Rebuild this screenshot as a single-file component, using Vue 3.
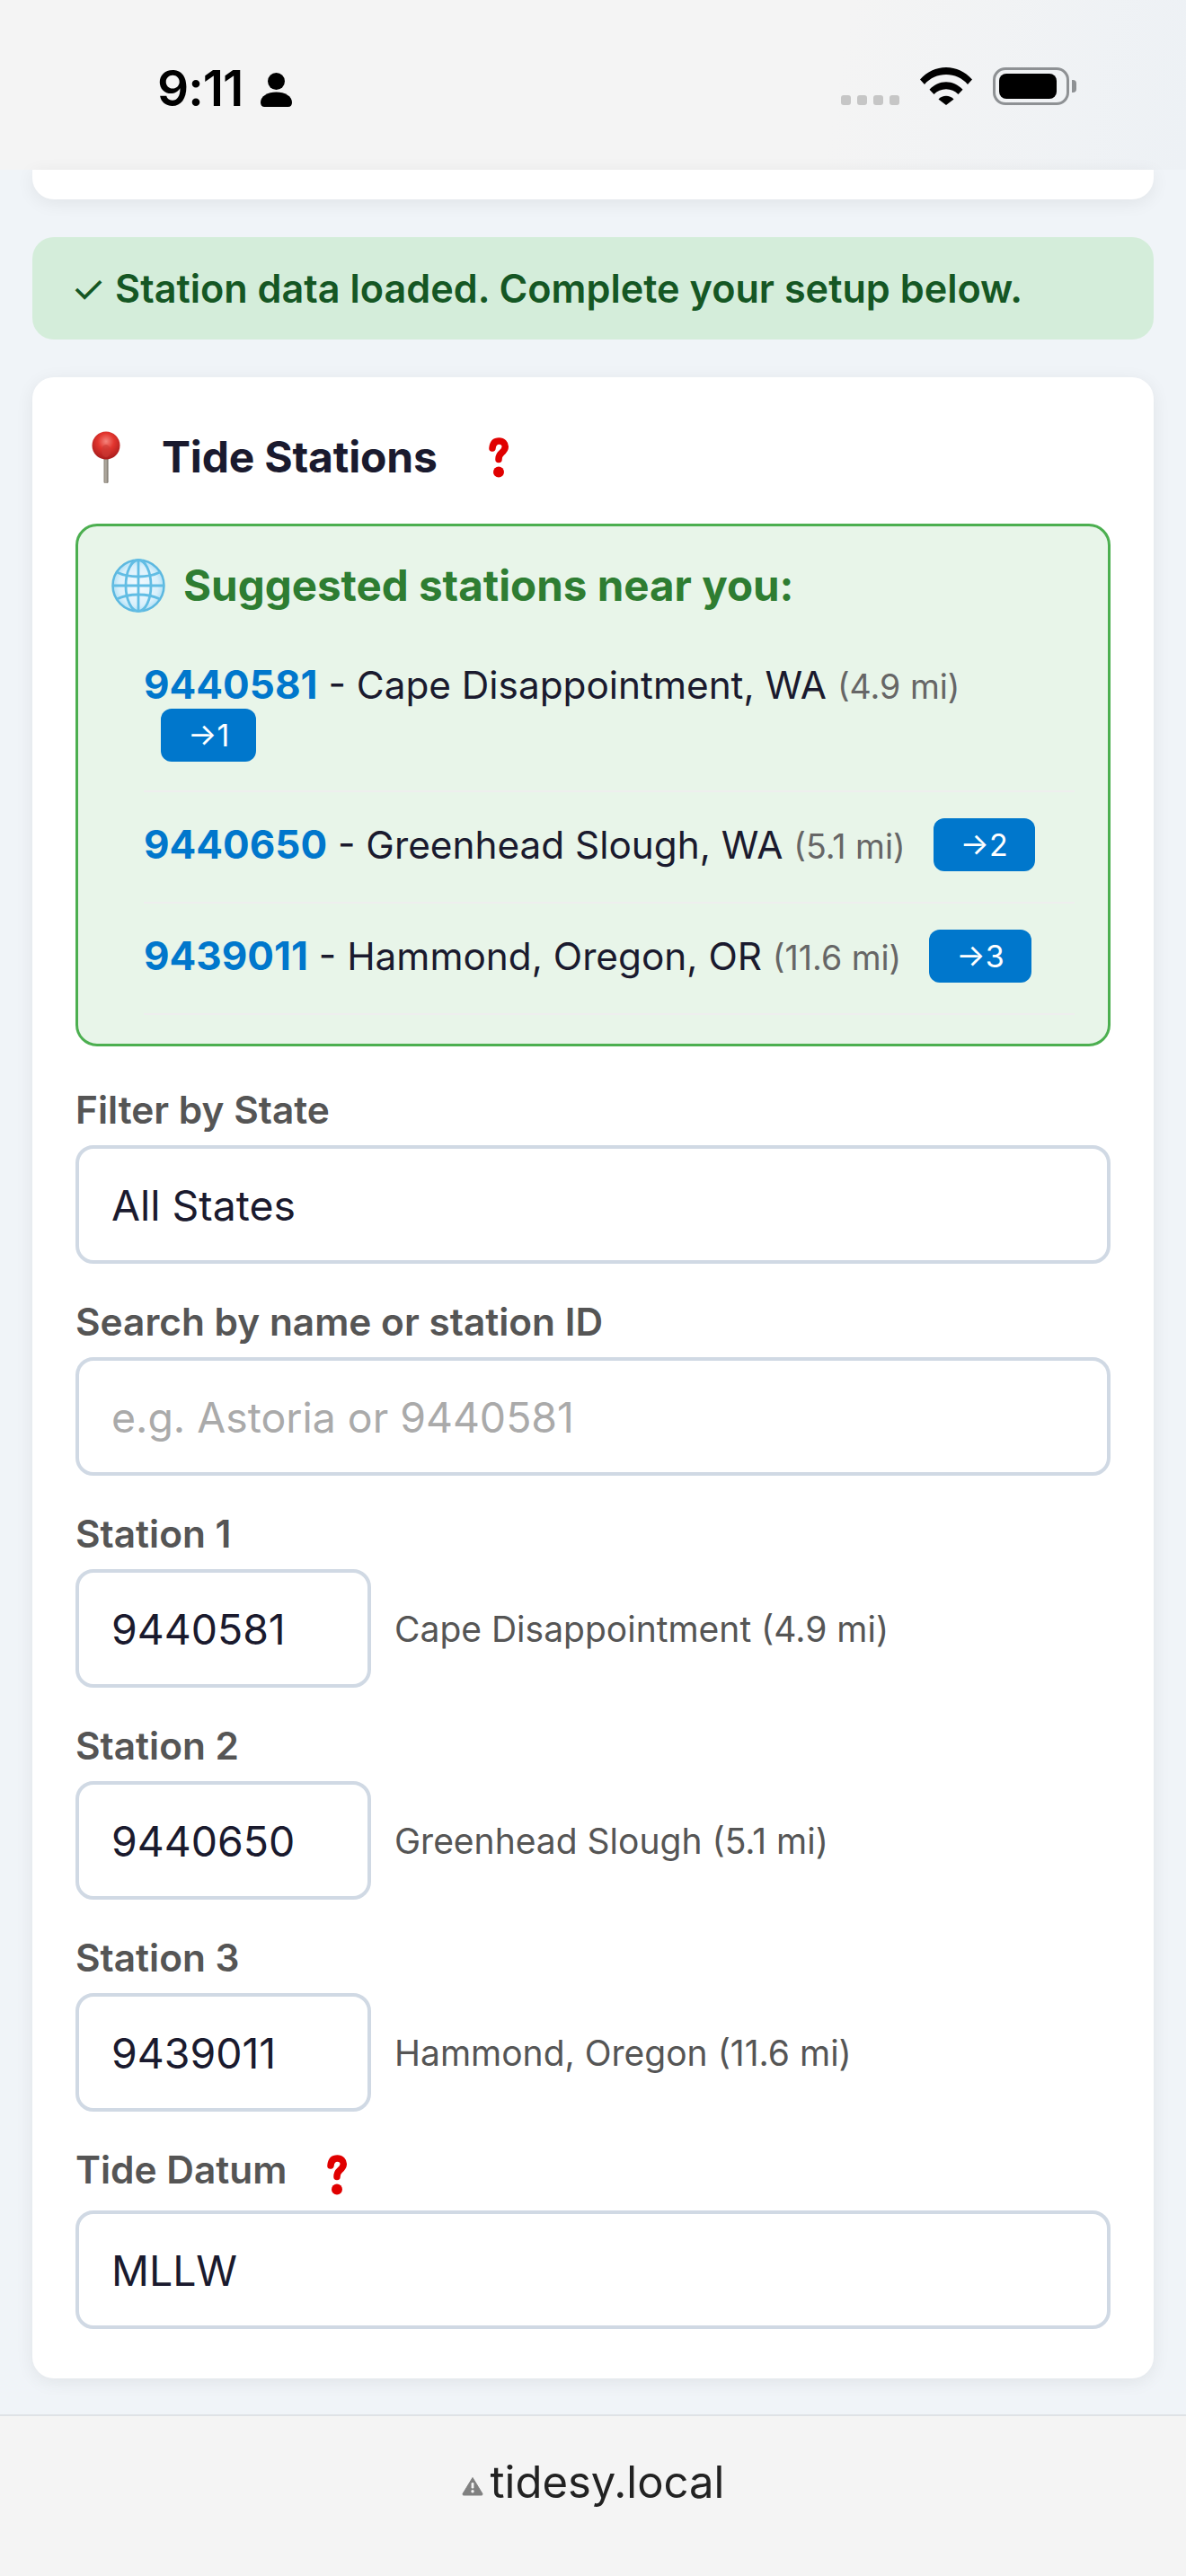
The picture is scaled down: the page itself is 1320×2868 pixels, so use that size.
<template>
  <div class="page">
    <header class="status">
      <div class="status-left">
        <span class="clock">9:11</span>
        <svg class="person" viewBox="0 0 35 38"><circle cx="17.5" cy="9.5" r="9.5"/><path d="M0 33c0-7 8-11.5 17.5-11.5S35 26 35 33c0 3-1.5 5-4.5 5h-26C1.500 38 0 36 0 33z"/></svg>
      </div>
      <div class="status-right">
        <div class="dots"><i v-for="n in 4" :key="n"></i></div>
        <svg class="wifi" viewBox="0 0 58 42">
          <path d="M0 13.500C7.500 4.800 18 0 29 0s21.500 4.800 29 13.500l-5 5.400C46.800 11.700 38.200 8 29 8S11.200 11.700 5 18.900z"/>
          <path d="M10.500 24.800C15.300 19.400 22 16.300 29 16.300s13.700 3.100 18.500 8.500l-5 5.300C39 26.300 34.200 24.200 29 24.200s-10 2.100-13.500 5.900z"/>
          <path d="M20.500 35.500c2.200-2.400 5.300-3.700 8.500-3.700s6.300 1.300 8.500 3.700L29 42z"/>
        </svg>
        <div class="battery"><div class="battery-fill"></div></div>
        <div class="battery-cap"></div>
      </div>
    </header>

    <div class="stub"></div>

    <div class="banner">
      <div><span class="ok">✓</span> Station data loaded. Complete your setup below.</div>
    </div>

    <section class="card">
      <h2 class="card-title">
        <svg class="pin" viewBox="0 0 32 58">
          <defs>
            <radialGradient id="pinHead" cx="0.5" cy="0.35" r="0.65">
              <stop offset="0" stop-color="#f4847c"/>
              <stop offset="0.45" stop-color="#e2352e"/>
              <stop offset="1" stop-color="#a81c1c"/>
            </radialGradient>
            <linearGradient id="pinStem" x1="0" x2="1" y1="0" y2="0">
              <stop offset="0" stop-color="#8a8378"/>
              <stop offset="0.5" stop-color="#b5afa5"/>
              <stop offset="1" stop-color="#6b655c"/>
            </linearGradient>
          </defs>
          <rect x="13.500" y="28" width="5" height="30" rx="1.500" fill="url(#pinStem)"/>
          <circle cx="16" cy="16" r="15.500" fill="url(#pinHead)"/>
          <ellipse cx="16" cy="22" rx="5" ry="7" fill="#c93a36" opacity="0.6"/>
        </svg>
        <span class="title-text">Tide Stations</span>
        <svg class="help" viewBox="0 0 24 46">
          <path d="M5 13C5.500 7.500 8 5 12.500 5c4.300 0 6.800 2.800 6.800 6.300 0 3.500-2 5.200-4.200 7-2.100 1.800-3.100 3.400-3.100 7.200" fill="none" stroke="#e00000" stroke-width="7.500" stroke-linecap="round"/>
          <circle cx="12" cy="39.500" r="6" fill="#e00000"/>
        </svg>
      </h2>

      <div class="suggest">
        <div class="suggest-title">
          <svg class="globe" viewBox="0 0 60 60">
            <defs>
              <radialGradient id="globeBg" cx="0.5" cy="0.5" r="0.55">
                <stop offset="0" stop-color="#f6fbff"/>
                <stop offset="0.7" stop-color="#d9f0fb"/>
                <stop offset="1" stop-color="#9fd9f3"/>
              </radialGradient>
            </defs>
            <circle cx="30" cy="30" r="28.500" fill="url(#globeBg)" stroke="#5cb8e0" stroke-width="2.500"/>
            <g fill="none" stroke="#62bde4" stroke-width="2.800">
              <ellipse cx="30" cy="30" rx="14" ry="28.500"/>
              <path d="M30 1.500v57"/>
              <path d="M1.500 30h57"/>
              <path d="M6 15c7 3.500 15 5 24 5s17-1.500 24-5"/>
              <path d="M6 45c7-3.500 15-5 24-5s17 1.500 24 5"/>
            </g>
          </svg>
          <span>Suggested stations near you:</span>
        </div>
        <ul class="suggest-list">
          <li v-for="(s, i) in suggestions" :key="s.id" class="suggest-row">
            <span class="sid">{{ s.id }}</span> - {{ s.name }} <span class="dist">({{ s.dist }} mi)</span>{{ ' ' }}<button class="assign">→{{ i + 1 }}</button>
          </li>
        </ul>
      </div>

      <label class="lbl lbl-first">Filter by State</label>
      <select class="inp">
        <option>All States</option>
      </select>

      <label class="lbl">Search by name or station ID</label>
      <input class="inp" type="text" placeholder="e.g. Astoria or 9440581" />

      <template v-for="(s, i) in slots" :key="s.id">
        <label class="lbl">Station {{ i + 1 }}</label>
        <div class="slot-row">
          <input class="inp inp-slot" type="text" :value="s.id" />
          <span class="hint">{{ s.hint }}</span>
        </div>
      </template>

      <label class="lbl lbl-help">
        Tide Datum
        <svg class="help" viewBox="0 0 24 46">
          <path d="M5 13C5.500 7.500 8 5 12.500 5c4.300 0 6.800 2.800 6.800 6.300 0 3.500-2 5.200-4.200 7-2.100 1.800-3.100 3.400-3.100 7.200" fill="none" stroke="#e00000" stroke-width="7.500" stroke-linecap="round"/>
          <circle cx="12" cy="39.500" r="6" fill="#e00000"/>
        </svg>
      </label>
      <select class="inp">
        <option>MLLW</option>
      </select>
    </section>

    <footer class="urlbar">
      <svg class="warn" viewBox="0 0 24 22">
        <path d="M12 1.500 22.800 19.200c.6 1 0 1.800-1 1.800H2.200c-1 0-1.600-.8-1-1.800z" fill="#808080" stroke="#808080" stroke-linejoin="round"/>
        <rect x="10.600" y="7" width="2.800" height="6.500" rx="1.200" fill="#f4f4f4"/>
        <circle cx="12" cy="16.800" r="1.700" fill="#f4f4f4"/>
      </svg>
      <span class="url">tidesy.local</span>
    </footer>
  </div>
</template>

<script setup>
const suggestions = [
  { id: '9440581', name: 'Cape Disappointment, WA', dist: '4.9' },
  { id: '9440650', name: 'Greenhead Slough, WA', dist: '5.1' },
  { id: '9439011', name: 'Hammond, Oregon, OR', dist: '11.6' }
]

const slots = [
  { id: '9440581', hint: 'Cape Disappointment (4.9 mi)' },
  { id: '9440650', hint: 'Greenhead Slough (5.1 mi)' },
  { id: '9439011', hint: 'Hammond, Oregon (11.6 mi)' }
]
</script>

<style>
html, body { margin: 0; background: #f0f4f8; }
</style>

<style scoped>
.page {
  width: 1320px;
  height: 2868px;
  overflow: hidden;
  background: #f0f4f8;
  font-family: Inter, "Liberation Sans", sans-serif;
  color: #1a1a2e;
  display: flex;
  flex-direction: column;
}

/* status bar */
.status {
  height: 189px;
  flex: none;
  box-sizing: border-box;
  padding: 75px 122px 0 175px;
  display: flex;
  justify-content: space-between;
  align-items: flex-start;
  background: linear-gradient(100deg, #f4f4f4 70%, #edf1f5 100%);
}
.status-left { display: flex; align-items: center; gap: 20px; }
.clock { font-size: 55px; font-weight: 600; line-height: 46px; color: #000; letter-spacing: -1px; }
.person { width: 35px; height: 38px; fill: #000; margin-top: 4px; }
.status-right { display: flex; align-items: flex-end; }
.dots { display: flex; gap: 7px; margin-right: 23px; }
.dots i { width: 11px; height: 11px; border-radius: 3px; background: #c6c6c6; display: block; }
.wifi { width: 58px; height: 42px; fill: #000; margin-right: 23px; }
.battery {
  width: 85px;
  height: 42px;
  box-sizing: border-box;
  border: 3px solid #8e9194;
  border-radius: 14px;
  padding: 4px;
}
.battery-fill { width: 64px; height: 100%; background: #000; border-radius: 8px; }
.battery-cap { width: 5px; height: 14px; background: #8e9194; border-radius: 0 4px 4px 0; margin: 0 0 14px 3px; }

.stub {
  height: 33px;
  flex: none;
  margin: 0 36px;
  background: #fff;
  border-radius: 0 0 24px 24px;
  box-shadow: 0 4px 20px rgba(0, 0, 0, 0.07);
}

.banner {
  flex: none;
  height: 114px;
  box-sizing: border-box;
  margin: 42px 36px 0;
  padding: 0 43px;
  display: flex;
  align-items: center;
  background: #d4edda;
  border-radius: 24px;
  color: #155724;
  font-size: 43.2px;
  font-weight: 600;
}
.ok { font-weight: 400; }

.card {
  flex: none;
  height: 2228px;
  box-sizing: border-box;
  margin: 42px 36px 0;
  padding: 48px;
  background: #fff;
  border-radius: 24px;
  box-shadow: 0 4px 20px rgba(0, 0, 0, 0.07);
}
.card-title {
  display: flex;
  align-items: center;
  height: 67px;
  margin: 7px 0 41px;
  padding-left: 18px;
  font-size: 48px;
  font-weight: 700;
}
.pin { width: 32px; height: 58px; flex: none; }
.title-text { margin-left: 46px; letter-spacing: -0.2px; }
.help { width: 24px; height: 46px; flex: none; }
.card-title .help { margin-left: 56px; }

.suggest {
  height: 582px;
  box-sizing: border-box;
  padding: 36px 37px 0;
  background: #e8f5e9;
  border: 3px solid #4caf50;
  border-radius: 24px;
}
.suggest-title {
  display: flex;
  align-items: center;
  gap: 20px;
  color: #2e7d32;
  font-size: 47.5px;
  font-weight: 700;
  line-height: 60px;
  margin-bottom: 24px;
}
.globe { width: 60px; height: 60px; flex: none; }
.suggest-list { list-style: none; margin: 0; padding: 0 0 0 36px; }
.suggest-row {
  padding: 29px 0 34px;
  border-bottom: 2px solid #eeeeee;
  font-size: 42.3px;
}
.suggest-row:first-child { padding-bottom: 32px; }
.sid { color: #0077cc; font-size: 44px; font-weight: 700; }
.dist { color: #666; font-size: 37.5px; }
.assign {
  display: inline-block;
  margin-left: 19px;
  height: 59px;
  padding: 0 30px;
  box-sizing: border-box;
  border: none;
  border-radius: 12px;
  background: #0077cc;
  color: #fff;
  font-family: inherit;
  font-size: 34px;
  vertical-align: 3px;
}

.lbl {
  display: block;
  margin: 40px 0 14px;
  font-size: 42.4px;
  font-weight: 600;
  line-height: 50px;
  color: #555;
}
.lbl-first { margin-top: 46px; }
.lbl-help { display: flex; align-items: center; gap: 44px; height: 50px; margin-bottom: 20px; }
.lbl-help .help { transform: translateY(5px); }
.inp {
  display: block;
  width: 100%;
  height: 132px;
  box-sizing: border-box;
  padding: 2px 36px 0;
  background: #fff;
  border: 4px solid #d0d9e4;
  border-radius: 20px;
  font-family: inherit;
  font-size: 46.4px;
  color: #1a1a2e;
  appearance: none;
  outline: none;
}
.inp::placeholder { color: #aaa; }
.slot-row { display: flex; align-items: center; gap: 26px; }
.inp-slot { width: 329px; flex: none; }
.hint { font-size: 39px; color: #555; }

.urlbar {
  flex: none;
  height: 180px;
  margin-top: 40px;
  box-sizing: border-box;
  border-top: 2px solid #dfe2e6;
  background: #f4f4f4;
  display: flex;
  justify-content: center;
  align-items: center;
  gap: 8px;
  padding-bottom: 30px;
  color: #222;
}
.warn { width: 24px; height: 22px; margin-top: 8px; }
.url { font-size: 49px; line-height: 60px; }
</style>
